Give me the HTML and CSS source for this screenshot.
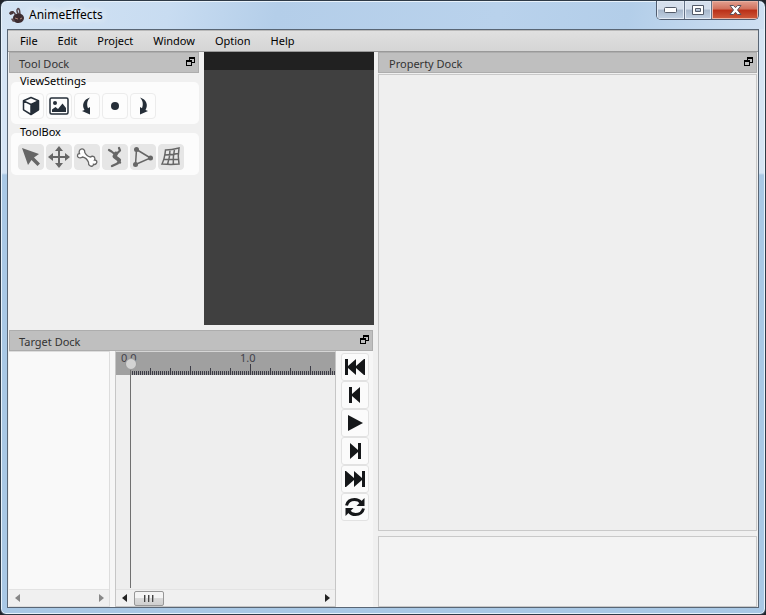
FILE: index.html
```html
<!DOCTYPE html>
<html lang="en">

<head>
    <meta charset="UTF-8">
    <meta name="viewport" content="width=device-width, initial-scale=1.0">
    <title>AnimeEffects</title>
    <link rel="stylesheet" href="styles.css">
</head>

<body>
    <svg class="sprite" aria-hidden="true">
        <symbol id="float" viewBox="0 0 9 9">
            <path d="M3 0h6v6H6v3H0V3h3zM4 2v1h2v2h2V2zM1 5v3h4V5z" fill="#000" fill-rule="evenodd" />
        </symbol>
    </svg>

    <div class="window">
        <header class="titlebar">
            <svg class="logo" width="16" height="17" viewBox="0 0 16 17">
                <path d="M6.500 8C6 6 4.500 5 2.500 5.200M9.500 7C7.500 5 7.500 2.500 9 1.500c2 0 1.500 3 2 5.500" fill="none" stroke="#55454a" stroke-width="1.500" />
                <path d="M0 6.500C1 4 3 3.500 5 4.500L4 7 1.500 8z" fill="#49383c" />
                <path d="M4 11c0-3 3-4.500 6-4.500s5 2.500 5 4.500-2 5-5.500 5S4 14 4 11z" fill="#3c2c30" />
                <path d="M2 12c2-1 3 0 4 2l-2 1z" fill="#5b484c" />
                <path d="M6 11l3 1M13 11l-2 1" stroke="#b0877a" fill="none" />
            </svg>
            <h1>AnimeEffects</h1>
            <div class="window-buttons">
                <button type="button" aria-label="Minimize">
                    <svg width="13" height="6" viewBox="0 0 13 6"><rect x=".5" y=".5" width="12" height="5" rx="1" fill="#fff" stroke="#535b69" /></svg>
                </button>
                <button type="button" aria-label="Maximize">
                    <svg width="12" height="10" viewBox="0 0 12 10"><path d="M.5.5h11v9H.5zM3.500 3.500v3h5v-3z" fill="#fff" fill-rule="evenodd" stroke="#535b69" /></svg>
                </button>
                <button type="button" class="close" aria-label="Close">
                    <svg width="13" height="10" viewBox="0 0 13 10"><path d="M1 .5h3.500l2 2.200 2-2.200H12L8.500 5l3.500 4.500H8.500l-2-2.200-2 2.200H1L4.500 5z" fill="#fff" stroke="#59525c" /></svg>
                </button>
            </div>
        </header>

        <div class="client">
            <nav class="menubar">
                <button type="button">File</button>
                <button type="button">Edit</button>
                <button type="button">Project</button>
                <button type="button">Window</button>
                <button type="button">Option</button>
                <button type="button">Help</button>
            </nav>

            <main class="workspace">
                <div class="left">
                    <div class="upper">
                        <section class="tool-dock">
                            <div class="dock-title">
                                <h2>Tool Dock</h2>
                                <button type="button" aria-label="Float Tool Dock"><svg width="9" height="9"><use href="#float" /></svg></button>
                            </div>

                            <h3>ViewSettings</h3>
                            <div class="tools">
                                <button type="button" aria-label="Solid view">
                                    <svg width="20" height="20" viewBox="0 0 20 20"><path d="M10 1.500l7.500 3.300v9L10 18.500l-7.500-4.700v-9zM2.500 4.800L10 8.500l7.500-3.700M10 8.500v10" fill="none" stroke="#252e38" stroke-width="1.500" stroke-linejoin="round" /><path d="M10 8.500l7.500-3.700v9L10 18.500z" fill="#252e38" /></svg>
                                </button>
                                <button type="button" aria-label="Image view">
                                    <svg width="20" height="20" viewBox="0 0 20 20"><rect x="1" y="2" width="18" height="16" rx="1.500" fill="none" stroke="#252e38" stroke-width="1.500" /><circle cx="6" cy="7" r="2" fill="#252e38" /><path d="M3 16v-2.500l3.500-2.500 2.500 2 4.500-5.500L17 12v4z" fill="#252e38" /></svg>
                                </button>
                                <button type="button" aria-label="Rotate left">
                                    <svg width="20" height="20" viewBox="0 0 20 20"><path d="M13 1.500C6.500 3.500 4.500 9 7.500 14L5 15l8 3.500L13 11l-2 1.200C9.500 8.500 10 4.500 13 1.500z" fill="#252e38" /></svg>
                                </button>
                                <button type="button" aria-label="Reset rotation">
                                    <svg width="20" height="20" viewBox="0 0 20 20"><circle cx="10" cy="10" r="4" fill="#252e38" /></svg>
                                </button>
                                <button type="button" aria-label="Rotate right">
                                    <svg width="20" height="20" viewBox="0 0 20 20"><path d="M7 1.500c6.500 2 8.500 7.500 5.500 12.500l2.500 1-8 3.500L7 11l2 1.200C10.500 8.500 10 4.500 7 1.500z" fill="#252e38" /></svg>
                                </button>
                            </div>

                            <h3>ToolBox</h3>
                            <div class="tools toolbox">
                                <button type="button" aria-label="Select">
                                    <svg width="22" height="22" viewBox="0 0 22 22"><path d="M2 2l17 6-5 3.500 6 6-2.500 2.500-6-6L8 19z" fill="#666" /></svg>
                                </button>
                                <button type="button" aria-label="Move">
                                    <svg width="22" height="22" viewBox="0 0 22 22"><path d="M11 3v16M3 11h16" stroke="#666" stroke-width="2" /><path d="M11 0l4 5H7zM11 22l4-5H7zM0 11l5-4v8zM22 11l-5-4v8z" fill="#666" /></svg>
                                </button>
                                <button type="button" aria-label="Bone">
                                    <svg width="22" height="22" viewBox="0 0 22 22"><path d="M5 3.200c2-1 4 .8 3.800 3.300 1.200 2.500 3 4 5.700 4.500 1.800-1.500 4-.5 4.300 1 .2.800 0 1.500-.3 2 2.200-.2 3 2 1.800 3.500-1 1.200-2.300 1-2.800.8 0 1.800-2 2.400-3.500 1.500-1.300-.8-1.700-2-1.500-3.500C11.300 13.500 9 11.500 6.500 11c-1.500 1-3.200 1-4.300.2C.8 10 1.500 7.500 3.500 7.500 2.700 6 3.200 4 5 3.200z" fill="#fff" stroke="#666" stroke-width="1.300" /></svg>
                                </button>
                                <button type="button" aria-label="Pose">
                                    <svg width="22" height="22" viewBox="0 0 22 22"><g fill="none" stroke="#666" stroke-linecap="round" stroke-linejoin="round"><path d="M5 4l2.500 1.500L10 7.500M15 2l1 2.500-3 3" stroke-width="2.200" /><path d="M12 7.500l-1.500 3L15 14" stroke-width="4" /><path d="M15.500 14.500l-2 3L8 20M14.500 14.500l1.500 2" stroke-width="2.400" /></g></svg>
                                </button>
                                <button type="button" aria-label="Free mesh">
                                    <svg width="22" height="22" viewBox="0 0 22 22"><path d="M4.500 3.500l14 8.500-15 6.500z" fill="none" stroke="#666" stroke-width="1.500" /><g fill="#666"><circle cx="4.500" cy="3.500" r="2.500" /><circle cx="18.500" cy="12" r="2.500" /><circle cx="3.500" cy="18.500" r="2.500" /></g></svg>
                                </button>
                                <button type="button" aria-label="Mesh">
                                    <svg width="22" height="22" viewBox="0 0 22 22"><path d="M5.500 4c4 0 8-.5 13.500-2-1 6-1 11 0 16-5 .5-11 .5-17 0 2-4 3-9 3.500-14zM4.500 9c5 0 9-.5 13.700-1.500M3.500 13.500h14.700M10 4c0 5-1 10-2.500 14.500M14.500 3.200c-1 5-1.500 10-1.200 15.200" fill="none" stroke="#666" stroke-width="1.500" /></svg>
                                </button>
                            </div>
                        </section>
                        <div class="canvas"></div>
                    </div>

                    <section class="target-dock">
                        <div class="dock-title">
                            <h2>Target Dock</h2>
                            <button type="button" aria-label="Float Target Dock"><svg width="9" height="9"><use href="#float" /></svg></button>
                        </div>
                        <div class="target-body">
                            <div class="tree">
                                <div class="scrollbar disabled">
                                    <button type="button" aria-label="Scroll tree left"><svg width="5" height="8"><path d="M5 0v8L0 4z" /></svg></button>
                                    <button type="button" class="scroll-end" aria-label="Scroll tree right"><svg width="5" height="8"><path d="M0 0v8l5-4z" /></svg></button>
                                </div>
                            </div>

                            <div class="timeline">
                                <div class="ruler">
                                    <div class="ticks"></div>
                                    <span class="time time-start">0.0</span>
                                    <span class="time time-one">1.0</span>
                                </div>
                                <div class="tracks"></div>
                                <div class="playhead"></div>
                                <div class="scrollbar">
                                    <button type="button" aria-label="Scroll timeline left"><svg width="5" height="8"><path d="M5 0v8L0 4z" /></svg></button>
                                    <div class="thumb"><i></i><i></i><i></i></div>
                                    <button type="button" class="scroll-end" aria-label="Scroll timeline right"><svg width="5" height="8"><path d="M0 0v8l5-4z" /></svg></button>
                                </div>
                            </div>

                            <div class="player">
                                <button type="button" aria-label="First frame">
                                    <svg width="22" height="22" viewBox="0 0 22 22"><path d="M1 3h3v7l8-7v7l8-7h1v16h-1l-8-7v7l-8-7v7H1z" /></svg>
                                </button>
                                <button type="button" aria-label="Previous frame">
                                    <svg width="22" height="22" viewBox="0 0 22 22"><path d="M5 3h3v7l8-7v16l-8-7v7H5z" /></svg>
                                </button>
                                <button type="button" aria-label="Play">
                                    <svg width="22" height="22" viewBox="0 0 22 22"><path d="M4 3l15 8-15 8z" /></svg>
                                </button>
                                <button type="button" aria-label="Next frame">
                                    <svg width="22" height="22" viewBox="0 0 22 22"><path d="M17 3h-3v7L6 3v16l8-7v7h3z" /></svg>
                                </button>
                                <button type="button" aria-label="Last frame">
                                    <svg width="22" height="22" viewBox="0 0 22 22"><path d="M21 3h-3v7l-8-7v7L2 3H1v16h1l8-7v7l8-7v7h3z" /></svg>
                                </button>
                                <button type="button" aria-label="Loop">
                                    <svg width="22" height="22" viewBox="0 0 22 22"><path d="M2.500 9.500c1-4 4-6 8-6 3 0 5 1 6.500 3M19.500 12.500c-1 4-4 6-8 6-3 0-5-1-6.500-3" fill="none" stroke="#151719" stroke-width="3" /><path d="M20.500 2v8h-8zM1.500 20v-8h8z" /></svg>
                                </button>
                            </div>
                        </div>
                    </section>
                </div>

                <section class="property-dock">
                    <div class="dock-title">
                        <h2>Property Dock</h2>
                        <button type="button" aria-label="Float Property Dock"><svg width="9" height="9"><use href="#float" /></svg></button>
                    </div>
                    <div class="properties"></div>
                    <div class="info"></div>
                </section>
            </main>
        </div>
    </div>
</body>

</html>
```

FILE: styles.css
```css
* {
    box-sizing: border-box;
}

body {
    margin: 0;
    background: #20242a;
    color: #000;
    font-family: "Noto Sans", "Open Sans", sans-serif;
    font-size: 11px;
    line-height: 16px;
}

h1,
h2,
h3 {
    margin: 0;
    font-size: inherit;
    font-weight: 400;
}

button {
    display: flex;
    align-items: center;
    justify-content: center;
    padding: 0;
    border: none;
    background: none;
    color: inherit;
    font: inherit;
}

svg {
    display: block;
}

.sprite {
    display: none;
}

/* Window frame */
.window {
    display: flex;
    flex-direction: column;
    height: 100vh;
    padding: 0 6px 6px;
    border: 1px solid #2e3a47;
    border-radius: 7px 7px 6px 6px;
    background: linear-gradient(#d5e4f4 172px, #a9c8e5 174px);
    box-shadow: inset 0 0 0 1px #e8f2fb;
}

.titlebar {
    display: flex;
    align-items: flex-start;
    height: 27px;
    margin: 1px -5px 0;
    padding-left: 7px;
    border-radius: 6px 6px 0 0;
    background: linear-gradient(100deg, #d3e3f3, #c8dcf1 22%, #b4cee9 36%, #b9d2ec 65%, #b3cee9 82%, #cfe0f2);
}

.logo {
    margin-top: 5px;
}

.titlebar h1 {
    margin: 4px 0 0 4px;
    font-size: 12px;
    line-height: 18px;
    text-shadow: 0 0 8px #fff, 0 0 10px #fff;
}

.window-buttons {
    display: flex;
    height: 19px;
    margin: -1px 5px 0 auto;
    border: 1px solid #515d70;
    border-top: none;
    border-radius: 0 0 5px 5px;
    overflow: hidden;
}

.window-buttons button {
    width: 27px;
    background: linear-gradient(#d5dfec 45%, #a7b7cb 50%, #c2d2e4);
    box-shadow: inset 0 0 0 1px #e3ebf5;
}

.window-buttons button + button {
    border-left: 1px solid #647287;
}

.window-buttons .close {
    width: 47px;
    background: linear-gradient(#e3a191, #d1705b 45%, #b92f17 50%, #cf5b3c);
    box-shadow: inset 0 0 0 1px #e9b2a2;
}

.client {
    display: flex;
    flex: 1;
    flex-direction: column;
    min-height: 0;
    border: 1px solid #596675;
    background: #f0f0f0;
}

.menubar {
    display: flex;
    gap: 20px;
    height: 22px;
    padding-left: 12px;
    border-top: 1px solid #b9b9b9;
    border-bottom: 1px solid #999;
    background: linear-gradient(#e0e0e0, #d5d5d5);
}

.workspace {
    display: flex;
    flex: 1;
    gap: 4px;
    min-height: 0;
}

.left {
    display: flex;
    flex-direction: column;
    flex: 0 0 366px;
    gap: 5px;
}

.upper {
    display: flex;
    flex: 1;
    gap: 4px;
}

/* Docks */
.dock-title {
    display: flex;
    align-items: center;
    justify-content: space-between;
    height: 21px;
    padding: 2px 3px 0 9px;
    border: 1px solid #adadad;
    background: #bfbfbf;
    color: #333;
}

.dock-title button {
    margin-bottom: 4px;
}

.tool-dock {
    width: 192px;
    padding: 0 1px;
}

.tool-dock h3 {
    position: relative;
    z-index: 1;
    height: 9px;
    padding-left: 11px;
}

.tools {
    display: flex;
    gap: 2px;
    height: 42px;
    margin-left: 2px;
    padding: 11px 0 0 7px;
    border-radius: 5px;
    background: #fcfcfc;
}

.tools button {
    width: 26px;
    height: 26px;
    border: 1px solid #ececec;
    border-radius: 4px;
    background: #fdfdfd;
}

.toolbox button {
    border-color: #e6e6e6;
    background: #e6e6e6;
}

.canvas {
    flex: 1;
    border-top: 18px solid #212121;
    background: #404040;
}

/* Target dock */
.target-dock {
    display: flex;
    flex-direction: column;
    flex: 0 0 277px;
    padding: 0 1px;
}

.target-body {
    display: flex;
    flex: 1;
    background: #f6f6f6;
}

.tree {
    display: flex;
    flex-direction: column;
    justify-content: flex-end;
    width: 101px;
    margin-right: 5px;
    border: 1px solid #ddd;
    border-left: none;
    background: #f9f9f9;
}

.timeline {
    position: relative;
    display: flex;
    flex: 1;
    flex-direction: column;
    border: 1px solid #c6c6c6;
    border-top-color: #d5d5d5;
    background: #eee;
}

.ruler {
    position: relative;
    height: 23px;
    padding-left: 14px;
    background: #a0a0a0;
}

/* One second is 60 frames, two pixels each */
.ticks {
    height: 100%;
    background-image:
        linear-gradient(to right, #3c3c46 1px, transparent 1px),
        linear-gradient(to right, #3c3c46 1px, transparent 1px),
        linear-gradient(to right, #3c3c46 1px, transparent 1px),
        linear-gradient(to right, #3c3c46 1px, transparent 1px);
    background-position: left bottom;
    background-repeat: repeat-x;
    background-size: 120px 11px, 60px 9px, 20px 7px, 2px 4px;
}

.time {
    position: absolute;
    top: -2px;
    color: #40404a;
}

.time-start {
    left: 5px;
}

.time-one {
    left: 124px;
}

.tracks {
    flex: 1;
}

.playhead {
    position: absolute;
    top: 12px;
    bottom: 18px;
    left: 14px;
    width: 1px;
    background: #707070;
}

.playhead::before {
    content: "";
    position: absolute;
    top: -6px;
    left: -5px;
    width: 10px;
    height: 10px;
    border: 1px solid #999;
    border-radius: 50%;
    background: #d3d3d3;
}

.scrollbar {
    display: flex;
    align-items: center;
    height: 17px;
    border-top: 1px solid #e3e3e3;
    background: #f0f0f0;
    fill: #222;
}

.scrollbar button {
    width: 16px;
    height: 16px;
}

.scrollbar.disabled {
    fill: #888;
}

.scrollbar .scroll-end {
    margin-left: auto;
}

.thumb {
    display: flex;
    align-items: center;
    justify-content: center;
    gap: 2px;
    width: 30px;
    height: 15px;
    margin-left: 2px;
    border: 1px solid #979797;
    border-radius: 2px;
    background: linear-gradient(#f4f4f4 45%, #dadada 50%, #cfcfcf);
}

.thumb i {
    width: 2px;
    height: 7px;
    background: linear-gradient(to right, #444 50%, #aaa 50%);
}

.player {
    display: flex;
    flex-direction: column;
    width: 37px;
    padding: 2px 4px 0 5px;
}

.player button {
    width: 28px;
    height: 28px;
    border: 1px solid #e2e2e2;
    border-radius: 3px;
    background: #fbfbfb;
    fill: #151719;
}

/* Property dock */
.property-dock {
    display: flex;
    flex: 1;
    flex-direction: column;
    padding-right: 1px;
}

.property-dock .dock-title {
    padding-left: 10px;
}

.properties {
    flex: 1;
    margin-top: 1px;
    border: 1px solid #c9c9c9;
    background: #efefef;
}

.info {
    height: 71px;
    margin-top: 5px;
    border: 1px solid #c9c9c9;
    background: #f3f3f3;
}
```
